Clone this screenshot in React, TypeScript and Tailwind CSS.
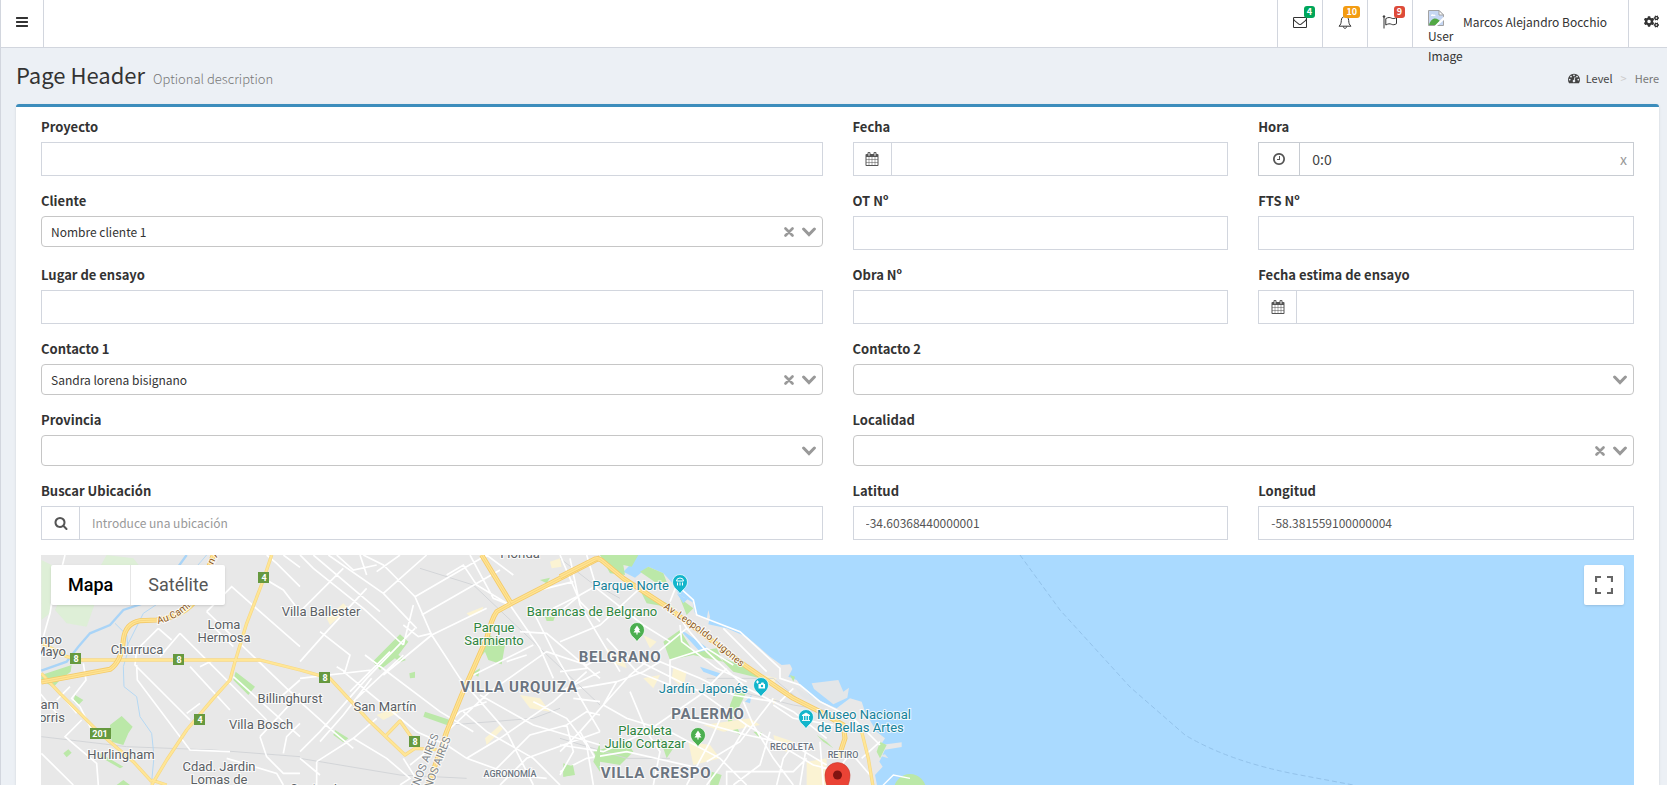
import type { ReactNode } from "react";
import { FaCogs } from "react-icons/fa";

const CALENDAR =
  "M192 1664h288v-288h-288v288zm352 0h320v-288h-320v288zm-352-352h288v-320h-288v320zm352 0h320v-320h-320v320zm-352-384h288v-288h-288v288zm736 736h320v-288h-320v288zm-384-736h320v-288h-320v288zm768 736h288v-288h-288v288zm-384-352h320v-320h-320v320zm-352-864v-288q0-13-9.500-22.500t-22.500-9.500h-64q-13 0-22.500 9.500t-9.500 22.500v288q0 13 9.500 22.500t22.500 9.500h64q13 0 22.500-9.500t9.500-22.500zm736 864h288v-320h-288v320zm-384-384h320v-288h-320v288zm384 0h288v-288h-288v288zm32-480v-288q0-13-9.500-22.500t-22.500-9.500h-64q-13 0-22.500 9.500t-9.500 22.500v288q0 13 9.500 22.500t22.500 9.500h64q13 0 22.500-9.500t9.500-22.500zm384-64v1280q0 52-38 90t-90 38h-1408q-52 0-90-38t-38-90v-1280q0-52 38-90t90-38h128v-96q0-66 47-113t113-47h64q66 0 113 47t47 113v96h384v-96q0-66 47-113t113-47h64q66 0 113 47t47 113v96h128q52 0 90 38t38 90z";
const BARS =
  "M1664 1344v128q0 26-19 45t-45 19h-1408q-26 0-45-19t-19-45v-128q0-26 19-45t45-19h1408q26 0 45 19t19 45zm0-512v128q0 26-19 45t-45 19h-1408q-26 0-45-19t-19-45v-128q0-26 19-45t45-19h1408q26 0 45 19t19 45zm0-512v128q0 26-19 45t-45 19h-1408q-26 0-45-19t-19-45v-128q0-26 19-45t45-19h1408q26 0 45 19t19 45z";
const ENVELOPE =
  "M1664 1504v-768q-32 36-69 66-268 206-426 338-51 43-83 67t-86.500 48.500-102.500 24.500h-2q-48 0-102.500-24.500t-86.500-48.500-83-67q-158-132-426-338-37-30-69-66v768q0 13 9.500 22.500t22.500 9.500h1472q13 0 22.500-9.500t9.500-22.500zm0-1051v-24.500l-.5-13-3-12.500-5.500-9-9-7.500-14-2.500h-1472q-13 0-22.500 9.500t-9.500 22.500q0 168 147 284 193 152 401 317 6 5 35 29.500t46 37.500 44.500 31.500 50.500 27.500 43 9h2q20 0 43-9t50.500-27.500 44.500-31.500 46-37.500 35-29.500q208-165 401-317 54-43 100.500-115.500t46.500-131.500zm128-37v1088q0 66-47 113t-113 47h-1472q-66 0-113-47t-47-113v-1088q0-66 47-113t113-47h1472q66 0 113 47t47 113z";
const CLOCK =
  "M1024 544v448q0 14-9 23t-23 9h-320q-14 0-23-9t-9-23v-64q0-14 9-23t23-9h224v-352q0-14 9-23t23-9h64q14 0 23 9t9 23zm416 352q0-148-73-273t-198-198-273-73-273 73-198 198-73 273 73 273 198 198 273 73 273-73 198-198 73-273zm224 0q0 209-103 385.500t-279.500 279.500-385.500 103-385.500-103-279.500-279.500-103-385.500 103-385.500 279.500-279.500 385.500-103 385.500 103 279.500 279.500 103 385.500z";
const SEARCH =
  "M1216 832q0-185-131.500-316.500t-316.500-131.500-316.500 131.500-131.500 316.500 131.500 316.500 316.500 131.500 316.500-131.500 131.500-316.500zm512 832q0 52-38 90t-90 38q-54 0-90-38l-343-342q-179 124-399 124-143 0-273.500-55.500t-225-150-150-225-55.500-273.500 55.500-273.500 150-225 225-150 273.500-55.500 273.500 55.500 225 150 150 225 55.500 273.500q0 220-124 399l343 343q37 37 37 90z";
const DASHBOARD =
  "M384 1152q0-53-37.500-90.500t-90.500-37.500-90.500 37.500-37.500 90.500 37.500 90.500 90.500 37.500 90.500-37.500 37.500-90.500zm192-448q0-53-37.500-90.500t-90.500-37.500-90.500 37.500-37.500 90.500 37.500 90.500 90.500 37.500 90.500-37.500 37.500-90.500zm428 481l101-382q6-26-7.500-48.500t-38.500-29.500-48 6.500-30 39.500l-101 382q-60 5-107 43.500t-63 98.500q-20 77 20 146t117 89 146-20 89-117q16-60-6-117t-72-91zm660-33q0-53-37.500-90.500t-90.500-37.500-90.500 37.500-37.500 90.500 37.500 90.500 90.500 37.500 90.500-37.500 37.500-90.500zm-640-640q0-53-37.500-90.500t-90.500-37.500-90.500 37.500-37.500 90.500 37.500 90.500 90.500 37.500 90.500-37.500 37.500-90.500zm448 192q0-53-37.500-90.500t-90.500-37.500-90.500 37.500-37.500 90.500 37.500 90.500 90.500 37.500 90.500-37.500 37.500-90.500zm320 448q0 261-141 483-19 29-54 29h-1402q-35 0-54-29-141-221-141-483 0-182 71-348t191-286 286-191 348-71 348 71 286 191 191 286 71 348z";

function Glyph({ d, className = "size-3.5" }: { d: string; className?: string }) {
  return (
    <svg viewBox="0 0 1792 1792" className={`${className} shrink-0 overflow-visible fill-current`} aria-hidden="true">
      <path d={d} />
    </svg>
  );
}

function BellIcon() {
  return (
    <svg viewBox="0 0 14 14" className="size-3.5 overflow-visible" fill="none" stroke="currentColor" strokeWidth="1" aria-hidden="true">
      <path d="M7 .2v1.300M1 11.200C2.800 9.600 3.200 8 3.300 5.500 3.400 3 4.700 1.600 7 1.600S10.600 3 10.700 5.500c.1 2.500.5 4.100 2.300 5.700z" strokeLinejoin="round" />
      <path d="M5.400 11.600c0 1 .7 1.700 1.600 1.700s1.600-.7 1.600-1.700" />
    </svg>
  );
}

function FlagIcon() {
  return (
    <svg viewBox="0 0 14 14" className="size-3.5 overflow-visible" fill="none" stroke="currentColor" strokeWidth="1" aria-hidden="true">
      <path d="M1 2v11.500" />
      <circle cx="1" cy="1.500" r=".8" fill="currentColor" />
      <path d="M2.800 3.600C5.500 2 7 2.400 8.600 3.200c1.500.7 3 .4 4.900-.7v6.200c-2 1.200-3.500 1.300-5 .6C6.800 8.500 5.300 8.600 2.800 10z" strokeLinejoin="round" />
    </svg>
  );
}

function BrokenImage() {
  return (
    <svg viewBox="0 0 16 16" className="size-4" aria-hidden="true">
      <path d="M.5.500h10.500l4.500 4.500v10.500H.5z" fill="#c6d7f3" stroke="#a3a3a3" />
      <path d="M11 .5V5h4.500z" fill="#fff" stroke="#a3a3a3" />
      <path d="M3 5.500a1.500 1.500 0 0 1 2.500-.8 1.400 1.400 0 0 1 2 1.300H3z" fill="#fff" />
      <path d="M1 15c1-4 3.500-6.500 6-6.500S11 10 12 11l-4 4z" fill="#52a844" />
      <path d="M16 6.500 6.500 16H9l7-6z" fill="#fff" />
    </svg>
  );
}

function Alert({ label, count, children, color }: { label: string; count: number; children: ReactNode; color: string }) {
  return (
    <button type="button" aria-label={label} className="relative flex w-[45px] items-center justify-center border-l border-[#d2d6de] pb-1">
      {children}
      <span className={`absolute top-[6px] right-[7px] h-3 rounded-[3px] px-[3px] text-[9px] leading-3 font-bold text-white ${color}`}>{count}</span>
    </button>
  );
}

const label = "mb-[5px] block text-[13px] leading-5 font-bold";
const box = "w-full min-w-0 border border-[#d2d6de] bg-white px-3 text-[12px] text-[#555] outline-none placeholder:text-[#999]";

type FieldProps = { id: string; text: string; value?: string; placeholder?: string; icon?: string; wide?: boolean };

function Field({ id, text, value, placeholder, icon, wide }: FieldProps) {
  return (
    <div className={wide ? "col-span-2" : ""}>
      <label htmlFor={id} className={label}>{text}</label>
      <div className="flex h-[34px]">
        {icon && (
          <span className="flex w-[38px] shrink-0 items-center justify-center border border-r-0 border-[#d2d6de] text-[#555]">
            <Glyph d={icon} />
          </span>
        )}
        <input id={id} type="text" defaultValue={value} placeholder={placeholder} className={box} />
      </div>
    </div>
  );
}

function Chooser({ id, text, value, clear }: { id: string; text: string; value?: string; clear?: boolean }) {
  return (
    <div className="col-span-2">
      <label htmlFor={id} className={label}>{text}</label>
      <div className="relative">
        <select id={id} defaultValue={value ?? ""} className="block h-[31px] w-full appearance-none rounded-[4px] border border-[#c6c6c6] bg-white pl-[9px] text-[12px] text-[#333] outline-none">
          <option>{value ?? ""}</option>
        </select>
        <div className="pointer-events-none absolute inset-y-0 right-[7px] flex items-center gap-2">
          {clear && (
            <button type="button" aria-label={`Limpiar ${text}`} className="pointer-events-auto">
              <svg viewBox="0 0 10 10" className="size-2.5" stroke="#999" strokeWidth="2.600" strokeLinecap="round">
                <path d="M1.500 1.500l7 7M8.500 1.500l-7 7" />
              </svg>
            </button>
          )}
          <svg viewBox="0 0 14 10" className="h-2.5 w-3.5" fill="none" stroke="#999" strokeWidth="3" strokeLinecap="round" aria-hidden="true">
            <path d="M1.600 2 7 7.600 12.400 2" />
          </svg>
        </div>
      </div>
    </div>
  );
}

type Place = { x: number; y: number; t: string; a?: "start" | "middle" | "end" };

const TOWNS: Place[] = [
  { x: 520, y: 558, t: "Florida" },
  { x: 321, y: 616, t: "Villa Ballester" },
  { x: 224, y: 629, t: "Loma" },
  { x: 224, y: 642, t: "Hermosa" },
  { x: 137, y: 654, t: "Churruca" },
  { x: 62, y: 644, t: "Campo", a: "end" },
  { x: 66, y: 656, t: "de Mayo", a: "end" },
  { x: 59, y: 709, t: "William", a: "end" },
  { x: 65, y: 722, t: "Morris", a: "end" },
  { x: 290, y: 703, t: "Billinghurst" },
  { x: 261, y: 729, t: "Villa Bosch" },
  { x: 121, y: 759, t: "Hurlingham" },
  { x: 219, y: 771, t: "Cdad. Jardin" },
  { x: 219, y: 784, t: "Lomas de" },
  { x: 385, y: 711, t: "San Martín" },
  { x: 335, y: 793, t: "Santos Lugares" },
];
const PARKS: Place[] = [
  { x: 494, y: 632, t: "Parque" },
  { x: 494, y: 645, t: "Sarmiento" },
  { x: 592, y: 616, t: "Barrancas de Belgrano" },
  { x: 645, y: 735, t: "Plazoleta" },
  { x: 645, y: 748, t: "Julio Cortazar" },
];
const SIGHTS: Place[] = [
  { x: 669, y: 590, t: "Parque Norte", a: "end" },
  { x: 748, y: 693, t: "Jardín Japonés", a: "end" },
  { x: 817, y: 719, t: "Museo Nacional", a: "start" },
  { x: 817, y: 732, t: "de Bellas Artes", a: "start" },
];
const DISTRICTS: Place[] = [
  { x: 620, y: 662, t: "BELGRANO" },
  { x: 519, y: 692, t: "VILLA URQUIZA" },
  { x: 708, y: 719, t: "PALERMO" },
  { x: 656, y: 778, t: "VILLA CRESPO" },
];
const BARRIOS: Place[] = [
  { x: 792, y: 750, t: "RECOLETA" },
  { x: 843, y: 758, t: "RETIRO" },
  { x: 510, y: 777, t: "AGRONOMÍA" },
];
const SHIELDS = [
  { x: 264, y: 578, t: "4" },
  { x: 76, y: 659, t: "8" },
  { x: 179, y: 660, t: "8" },
  { x: 200, y: 720, t: "4" },
  { x: 100, y: 734, t: "201" },
  { x: 325, y: 678, t: "8" },
  { x: 415, y: 742, t: "8" },
];

function Labels({ items, className }: { items: Place[]; className: string }) {
  return (
    <g className={className}>
      {items.map((p) => (
        <text key={p.t} x={p.x} y={p.y} textAnchor={p.a ?? "middle"}>{p.t}</text>
      ))}
    </g>
  );
}

function Pin({ x, y, color, children }: { x: number; y: number; color: string; children: ReactNode }) {
  return (
    <g transform={`translate(${x} ${y})`}>
      <path d="M0 12C-1.500 8-7.500 6-7.500 0a7.500 7.500 0 1 1 15 0C7.500 6 1.500 8 0 12z" fill={color} stroke="#fff" strokeOpacity=".7" />
      {children}
    </g>
  );
}

const tree = <path d="M0-4.500-3 0h1.200l-1.700 2.500h2.900V4.500h1.200V2.500h2.900L1.800 0H3z" fill="#fff" />;

/* Roads are traced in three sheets, each at three units to the pixel. */
const WEST = {
  minor:
    "M195 225 185 265 160 340 150 400 130 470M475 445 410 510 405 555 570 720M475 445 515 480M540 460 480 530M540 460 800 720M620 395 695 320 900 500M620 395 860 625 900 660M410 555 412 600 570 810 690 815M250 550 258 600 215 655 240 680 275 750M245 720 195 770 290 850 295 915M124 820 220 915M850 225 900 262M800 300 850 330 900 395M700 590 900 770M900 640 780 770M680 835 830 880 850 915M850 820 860 770 900 730M780 770 800 830 850 880 900 880M600 560 640 540M560 700 600 670M700 500 640 440M120 640 170 700M170 660 210 620M570 560 690 690M820 670 900 600M800 225 830 250 900 320M230 700 180 640",
  green:
    "M124 585 215 555 212 575 180 600 160 622 124 600ZM707 575 765 620 745 645 700 600ZM330 735 365 708 398 740 385 760 370 795 335 785ZM225 645 250 660 235 675 220 665ZM190 820 205 808 215 818 200 832ZM300 820 370 860 360 865 300 830ZM350 915 370 900 390 915Z",
  pale: "M190 330 260 320 285 370 260 440 200 430 165 390ZM124 240 155 255 150 400 124 420ZM320 225 400 235 420 260 300 260Z",
  water: "M560 225 520 280 465 320 430 370 370 390 330 435 270 460 235 500 200 545 124 572",
  creek: "M345 430 380 465 385 510 370 560 372 620 410 650 420 710 455 760 462 830 455 905M620 225 520 340 430 400 380 500",
  main: "M640 225 615 290 580 370Q540 412 470 420L420 422Q375 430 370 480 365 545 330 568L124 606",
  route: "M124 488 200 530 245 540H780L900 570M815 225 790 300 740 430 705 545 690 600 640 655 560 750 500 840 455 915M124 580 180 640 300 760 400 845 455 905M455 900 500 915",
};
const CENTRE = {
  minor:
    "M0 30 40 70 190 190 310 300M40 30 240 200M85 30 250 145 350 250M110 30 160 75 230 60M190 30 250 60 310 120 345 155 395 270 480 400M230 80 300 30M250 145 380 30M345 155 560 30M365 210 600 75M395 270 560 190M345 250 200 400 60 560 0 620M0 200 60 140 130 70M0 350 80 260 200 130M310 300 340 180M60 260 150 330 135 380 110 365M0 400 215 375M130 380 350 560 440 600M150 440 270 320M170 460 310 330M195 330 420 500 520 560M215 400 130 510 60 590M250 390 395 270M310 240 355 275 395 265M510 30 580 160 630 180M440 90 490 60 530 120 620 175M630 180 720 310 760 400M690 180 760 320 900 560M660 260 740 265 900 400M480 400 620 560 700 720M520 390 700 300M540 450 700 540 900 600M560 30 640 90M780 30 840 170 900 230M700 140 820 110M760 190 830 155M440 560 570 440 740 320 860 360 900 340M490 500 560 560 700 640 780 720M500 640 600 580 760 470 860 380M560 700 690 570 800 540 860 500 900 510M700 470 800 520 860 600 880 720M440 600 500 640 640 690 740 700M800 540 820 620 780 690M50 650 50 720M50 650 160 580 260 640 330 700 300 720M0 640 60 690M160 580 230 520M330 660 380 620M600 720 680 640 900 560M620 350 680 330M780 440 900 380M0 470 100 560 160 610M180 30 200 90M820 460 900 470M360 720 310 640M460 520 480 500 560 470",
  green:
    "M218 350 300 268 325 290 295 330 318 345 300 352 285 340 240 375ZM375 500 450 525 440 540 370 515ZM560 265 615 300 605 358 565 345 555 320 530 350ZM515 385 540 370 535 395ZM105 555 145 580 130 592 100 570ZM790 665 820 660 815 690 790 695ZM900 590 880 650 900 680ZM720 105 750 98 740 115ZM328 385 345 380 345 398 330 400ZM735 215H765L760 228H740Z",
  sand: "M80 220 130 175 145 190 90 240ZM230 510 290 485 300 500 250 525ZM660 450 720 460 750 500 690 490ZM555 580 600 540 608 552 560 600ZM750 50 780 40 785 65 755 70ZM500 205 550 185 545 200 510 215Z",
  main: "M900 38 635 175 590 200Q575 220 560 280L485 450 440 560 385 720M545 30 635 178",
  route: "M0 375 90 400 205 525 315 630 345 610 410 614M255 575 300 528 345 592",
  rail: "M360 70 520 120 900 480M0 640 300 690 500 700M450 540 700 520 780 490",
};
const EAST = {
  shore:
    "M-20 0H228L215 55 190 80 225 98 265 65 310 85 335 112 358 150 398 172 405 205 440 222 445 195 450 215 445 238 500 250 560 275 590 300 630 335 665 360 690 358 697 372 685 395 710 405 725 425 760 460 830 490 870 460 905 470 915 500 950 560 975 580 962 600 1025 592V606L975 614 958 650 968 665 945 690 955 740H-20Z",
  pier: "M755 415 835 405 850 440 867 428 862 458 820 478 762 432ZM700 420 725 455 790 490 810 482 730 440ZM960 632 985 640 975 628Z",
  minor:
    "M0 200 60 150 130 110M80 30 110 130 250 240 330 290M0 290 120 240 240 130 250 110M30 40 60 180 180 380M0 380 80 370 70 350M130 480 210 390 380 250 350 200M0 440 170 410 250 380M140 280 230 380 330 420M170 410 130 480 60 560 0 620M250 380 300 350 420 400 520 450 640 470M330 420 330 345 440 310 520 360M380 250 440 320 560 430 700 500 800 580M360 240 365 290 470 370 560 410M200 330 420 440 560 540 760 660 840 680M130 480 200 520 330 560 480 640 560 720M0 600 130 620 260 560 420 450 500 370M210 440 260 560 300 620 280 720M490 500 450 590 380 720M640 460 540 590 440 650M550 470 580 540 640 640 700 720M380 520 560 570 700 600 800 660M500 720V680H700L740 640M0 680 80 640 200 620 420 670M60 560 140 700M630 560 600 660 520 720M740 600 720 720M780 590 790 720M820 540 700 520 640 480M860 640 800 720M560 540 500 640 440 720M620 380 580 340 490 250M700 430 660 470M650 720 670 640 700 600M330 170 350 120 400 165 410 210 540 260 660 370V400L720 420 780 470 880 520 960 600M905 640 960 590M870 620 930 690",
  green:
    "M120 30H235L215 65 190 60 195 90 150 85ZM240 80 265 65 310 85 320 110 290 115ZM240 135 320 175 345 190 260 175ZM360 160 400 190 380 210ZM310 290 360 255 400 320 470 310 490 350 400 330 330 345ZM470 330 520 380 600 400 570 370 540 360ZM100 620 200 590 220 620 180 660 120 650ZM500 560 560 440 530 430 510 480ZM770 570 800 590 820 610 790 590ZM10 655 40 665 45 690 10 695ZM500 545 530 540 540 570ZM580 560 605 562 600 580ZM690 390 705 395 700 410ZM300 580 340 610 320 640ZM960 590 980 600 960 640 950 620ZM455 680 485 690 475 720H450Z",
  sand: "M340 370 380 380 370 430 335 400ZM250 270 290 290 270 310ZM140 310 190 340 200 370 150 350ZM250 400 300 390 280 430ZM430 540 570 520 600 540 490 560ZM385 590 450 600 480 640 400 660ZM635 460 650 465 640 478ZM740 650 800 640 800 720H740ZM640 570 700 590 680 620 650 610ZM610 390 650 400 640 420Z",
  water: "M365 260 420 320 450 315 430 300 375 262ZM420 365 450 375 480 385 470 395 430 380ZM350 145 375 160 395 150 370 175ZM555 470 575 450 570 475Z",
  main: "M0 95 105 42Q118 38 130 50L190 100 320 185 560 365 700 460 770 495 850 540 855 580 835 640",
  route: "M905 560 925 640 940 730",
  rail: "M440 400H640L760 500M500 430 700 480 820 500M0 40 90 110 180 160M0 580 200 640 330 640",
};

function Road({ main, route }: { main: string; route: string }) {
  return (
    <g fill="none" strokeLinejoin="round">
      <path d={route} stroke="#f7d884" strokeWidth="10" />
      <path d={route} stroke="#ffe696" strokeWidth="6" />
      <path d={main} stroke="#f4ca69" strokeWidth="15" />
      <path d={main} stroke="#ffe493" strokeWidth="10" />
      <path d={main} stroke="#f5cf75" strokeWidth="2" />
    </g>
  );
}

function CityMap() {
  const halo = "[paint-order:stroke] stroke-white/80 stroke-[2px]";
  return (
    <svg className="block h-full w-full font-[Roboto,sans-serif]" role="img" aria-label="Mapa de Buenos Aires">
      <rect width="100%" height="100%" fill="#aadaff" />
      <g transform="translate(-41 -555)">
        <rect x="0" y="480" width="561" height="400" fill="#e8e8e8" />
        <g transform="translate(560 545) scale(.33333)">
          <path d={EAST.shore} fill="#e8e8e8" />
          <path d={EAST.pier} fill="#e3e6e8" />
          <path d={EAST.green} fill="#bbe8a8" />
          <path d={EAST.sand} fill="#fbf3d3" />
          <path d={EAST.water} fill="#aadaff" />
          <path d={EAST.rail} fill="none" stroke="#d3d5d8" strokeWidth="3" />
          <path d={EAST.minor} fill="none" stroke="#fff" strokeWidth="5" />
          <circle cx="1050" cy="735" r="48" fill="#bbe8a8" />
          <path d="M950 740 1000 690 1050 700" fill="none" stroke="#fff" strokeWidth="4" />
        </g>
        <g transform="translate(300 545) scale(.33333)">
          <path d={CENTRE.green} fill="#bbe8a8" />
          <path d={CENTRE.sand} fill="#fbf3d3" />
          <path d={CENTRE.rail} fill="none" stroke="#d3d5d8" strokeWidth="3" />
          <path d={CENTRE.minor} fill="none" stroke="#fff" strokeWidth="5" />
        </g>
        <g transform="translate(0 480) scale(.33333)">
          <path d={WEST.pale} fill="#deefd7" />
          <path d={WEST.green} fill="#bbe8a8" />
          <path d="M124 770 380 800 640 810 900 830" fill="none" stroke="#d3d5d8" strokeWidth="3" />
          <path d={WEST.creek} fill="none" stroke="#b5d8f3" strokeWidth="3" />
          <path d={WEST.water} fill="none" stroke="#a9d4f7" strokeWidth="7" />
          <path d={WEST.minor} fill="none" stroke="#fff" strokeWidth="5" />
          <Road main={WEST.main} route={WEST.route} />
        </g>
        <g transform="translate(300 545) scale(.33333)">
          <Road main={CENTRE.main} route={CENTRE.route} />
        </g>
        <g transform="translate(560 545) scale(.33333)">
          <Road main={EAST.main} route={EAST.route} />
        </g>
        <path d="M1020 555 1060 610 1130 687 1185 735Q1230 762 1300 775L1380 790" fill="none" stroke="#93c2ea" strokeDasharray="5 3" />

        <path id="lugones" d="M663 608 Q700 632 722 651 T748 672" fill="none" />
        <path id="camino" d="M158 624 Q176 620 190 607 L206 580" fill="none" />
        <g className={`fill-[#8d5a1c] text-[10px] ${halo}`}>
          <text><textPath href="#lugones">Av. Leopoldo Lugones</textPath></text>
          <text><textPath href="#camino">Au Camino</textPath></text>
          <text transform="translate(213 565) rotate(-62)">n A</text>
        </g>
        <g className={`fill-[#80868b] text-[11px] ${halo}`}>
          <text transform="translate(412 805) rotate(-69)">BUENOS AIRES</text>
          <text transform="translate(424 808) rotate(-69)">BUENOS AIRES</text>
        </g>
        <Labels items={TOWNS} className={`fill-[#5b5f64] text-[13px] ${halo}`} />
        <Labels items={PARKS} className={`fill-[#2f8540] text-[13px] ${halo}`} />
        <Labels items={SIGHTS} className={`fill-[#168299] text-[13px] ${halo}`} />
        <Labels items={DISTRICTS} className={`fill-[#6b7480] text-[15px] font-bold tracking-wider ${halo}`} />
        <Labels items={BARRIOS} className={`fill-[#6b7480] text-[9px] font-medium ${halo}`} />
        {SHIELDS.map((s) => (
          <g key={`${s.x}-${s.y}`}>
            <rect x={s.x - (s.t.length > 1 ? 10 : 6)} y={s.y - 6} width={s.t.length > 1 ? 21 : 11} height="11" fill="#66993f" />
            <text x={s.x} y={s.y + 3} textAnchor="middle" className="fill-white text-[9px] font-bold">{s.t}</text>
          </g>
        ))}
        <Pin x={680} y={582} color="#12b5cb">
          <path d="M-3.500-1a3.500 3 0 0 1 7 0zM-2.500.5V3.500M0 .5V3.500M2.500.5V3.500" fill="none" stroke="#fff" />
        </Pin>
        <Pin x={637} y={630} color="#4caf50">{tree}</Pin>
        <Pin x={698} y={735} color="#4caf50">{tree}</Pin>
        <Pin x={761} y={685} color="#12b5cb">
          <path d="M-2.500-1H-.5L.5-2.500H2.500L3-1H4V3.500H-2.500z" fill="#fff" />
          <circle cx="1" cy="1" r="1.200" fill="#12b5cb" />
          <path d="M-3.500-4.500v3M-5-3h3" stroke="#fff" />
        </Pin>
        <Pin x={806} y={717} color="#12b5cb">
          <path d="M-4-1.500 0-4l4 2.500zM-4 3.500h8M-2.500-1v4M0-1v4M2.500-1v4" fill="#fff" stroke="#fff" strokeWidth=".9" />
        </Pin>
        <path d="M837 810C833 795 825 788 825 775a12.500 12.500 0 1 1 25 0C850 788 841 795 837 810z" fill="#ea4335" stroke="#c5352a" strokeWidth=".6" />
        <circle cx="837.500" cy="775" r="4.500" fill="#811411" />
      </g>
    </svg>
  );
}

export default function App() {
  return (
    <div className="flex h-screen flex-col overflow-hidden border-l border-[#d2d6de] bg-[#ecf0f5] font-['Noto_Sans_CJK_SC','Liberation_Sans',sans-serif] text-[12px] leading-5 text-[#333]">
      <header className="flex h-12 shrink-0 justify-between border-b border-[#d2d6de] bg-white">
        <button type="button" aria-label="Menú" className="flex w-[43px] items-center justify-center border-r border-[#d2d6de] pb-1">
          <Glyph d={BARS} />
        </button>
        <nav className="flex">
          <Alert label="Mensajes" count={4} color="bg-[#00a65a]"><Glyph d={ENVELOPE} /></Alert>
          <Alert label="Notificaciones" count={10} color="bg-[#f39c12]"><BellIcon /></Alert>
          <Alert label="Tareas" count={9} color="bg-[#dd4b39]"><FlagIcon /></Alert>
          <a href="#perfil" className="flex w-[216px] items-start gap-2.5 border-l border-[#d2d6de] pt-2.5 pl-[15px] whitespace-nowrap">
            <span className="flex w-[25px] flex-col">
              <BrokenImage />
              <span className="leading-5 whitespace-normal">User Image</span>
            </span>
            <span className="pt-0.5 leading-5">Marcos Alejandro Bocchio</span>
          </a>
          <button type="button" aria-label="Configuración" className="flex items-center border-l border-[#d2d6de] pr-2 pb-1 pl-[15px]">
            <FaCogs className="size-[15px]" />
          </button>
        </nav>
      </header>

      <main className="flex min-h-0 flex-1 flex-col pr-2 pl-[15px]">
        <div className="flex h-14 shrink-0 items-start justify-between pt-[13px]">
          <h1 className="flex items-baseline gap-2 text-[22px] leading-[26px]">
            Page Header
            <small className="text-[13px] leading-4 font-light text-[#777]">Optional description</small>
          </h1>
          <nav className="flex items-center pt-[7px] text-[11px] leading-5" aria-label="Ruta">
            <a href="#nivel" className="flex items-center gap-1.5 text-[#444]">
              <Glyph d={DASHBOARD} className="size-3" />
              Level
            </a>
            <span className="px-2 text-[#ccc]">&gt;</span>
            <span className="text-[#777]">Here</span>
          </nav>
        </div>

        <section className="flex min-h-0 flex-1 flex-col rounded-t-[3px] border-t-3 border-[#3c8dbc] bg-white px-[25px] pt-2.5 shadow-sm">
          <form className="grid shrink-0 grid-cols-4 gap-x-[30px] gap-y-[15px]">
            <Field id="proyecto" text="Proyecto" wide />
            <Field id="fecha" text="Fecha" icon={CALENDAR} />
            <div>
              <label htmlFor="hora" className={label}>Hora</label>
              <div className="relative flex h-[34px]">
                <span className="flex w-[41px] shrink-0 items-center justify-center border border-r-0 border-[#c8ccd2] text-[#555]">
                  <Glyph d={CLOCK} />
                </span>
                <input id="hora" type="text" defaultValue="0:0" className="w-full min-w-0 border border-[#c8ccd2] bg-white px-3 text-[14px] text-[#444] outline-none" />
                <button type="button" aria-label="Borrar hora" className="absolute inset-y-0 right-[7px] text-[14px] text-[#999]">x</button>
              </div>
            </div>
            <Chooser id="cliente" text="Cliente" value="Nombre cliente 1" clear />
            <Field id="ot" text="OT Nº" />
            <Field id="fts" text="FTS Nº" />
            <Field id="lugar" text="Lugar de ensayo" wide />
            <Field id="obra" text="Obra Nº" />
            <Field id="estimada" text="Fecha estima de ensayo" icon={CALENDAR} />
            <Chooser id="contacto1" text="Contacto 1" value="Sandra lorena bisignano" clear />
            <Chooser id="contacto2" text="Contacto 2" />
            <Chooser id="provincia" text="Provincia" />
            <Chooser id="localidad" text="Localidad" clear />
            <Field id="buscar" text="Buscar Ubicación" placeholder="Introduce una ubicación" icon={SEARCH} wide />
            <Field id="latitud" text="Latitud" value="-34.60368440000001" />
            <Field id="longitud" text="Longitud" value="-58.381559100000004" />
          </form>

          <div className="relative mt-[15px] min-h-0 flex-1 overflow-hidden bg-[#aadaff]">
            <CityMap />
            <div className="absolute top-2.5 left-2.5 flex h-10 rounded-[2px] bg-white font-[Roboto,sans-serif] text-[18px] shadow">
              <button type="button" className="border-r border-[#e6e6e6] px-[17px] font-medium text-black">Mapa</button>
              <button type="button" className="px-[17px] text-[#565656]">Satélite</button>
            </div>
            <button type="button" aria-label="Pantalla completa" className="absolute top-2.5 right-2.5 flex size-10 items-center justify-center rounded-[2px] bg-white shadow">
              <svg viewBox="0 0 18 18" className="size-[18px]" fill="none" stroke="#666" strokeWidth="2.200" aria-hidden="true">
                <path d="M1 6V1h5M12 1h5v5M17 12v5h-5M6 17H1v-5" />
              </svg>
            </button>
          </div>
        </section>
      </main>
    </div>
  );
}
